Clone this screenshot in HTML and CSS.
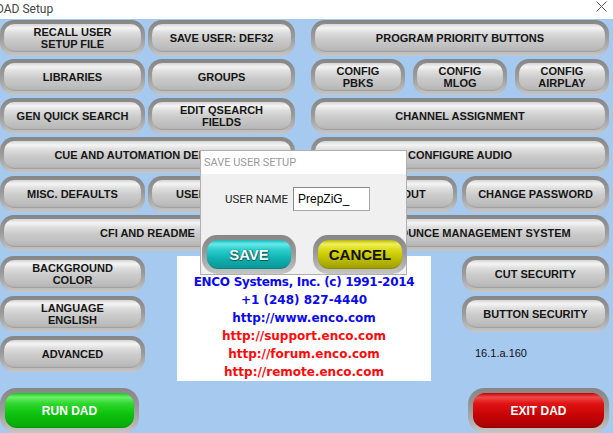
FILE: index.html
```html
<!DOCTYPE html>
<html>
<head>
<meta charset="utf-8">
<title>DAD Setup</title>
<link rel="stylesheet" href="styles.css">
</head>
<body>
<div class="titlebar">
  <span class="wintitle">DAD Setup</span>
  <svg class="close" width="11" height="11" viewBox="0 0 11 11"><path d="M0.5 0.5 L10.5 10.5 M10.5 0.5 L0.5 10.5" stroke="#555" stroke-width="1" fill="none"/></svg>
</div>
<div class="main">
  <div class="top">
    <div class="group group-left">
      <div class="row">
        <div class="btn w145"><span class="face">RECALL USER<br>SETUP FILE</span></div>
        <div class="btn w147"><span class="face">SAVE USER: DEF32</span></div>
      </div>
      <div class="row">
        <div class="btn w145"><span class="face">LIBRARIES</span></div>
        <div class="btn w147"><span class="face">GROUPS</span></div>
      </div>
      <div class="row">
        <div class="btn w145"><span class="face">GEN QUICK SEARCH</span></div>
        <div class="btn w147"><span class="face">EDIT QSEARCH<br>FIELDS</span></div>
      </div>
      <div class="row">
        <div class="btn full"><span class="face">CUE AND AUTOMATION DEFAULTS</span></div>
      </div>
      <div class="row">
        <div class="btn w145"><span class="face">MISC. DEFAULTS</span></div>
        <div class="btn w147"><span class="face">USER DEFAULTS</span></div>
      </div>
      <div class="row">
        <div class="btn full"><span class="face">CFI AND README</span></div>
      </div>
    </div>
    <div class="group group-right">
      <div class="row">
        <div class="btn full"><span class="face">PROGRAM PRIORITY BUTTONS</span></div>
      </div>
      <div class="row row-config">
        <div class="btn w94"><span class="face">CONFIG<br>PBKS</span></div>
        <div class="btn w94"><span class="face">CONFIG<br>MLOG</span></div>
        <div class="btn w94"><span class="face">CONFIG<br>AIRPLAY</span></div>
      </div>
      <div class="row">
        <div class="btn full"><span class="face">CHANNEL ASSIGNMENT</span></div>
      </div>
      <div class="row">
        <div class="btn full"><span class="face">CONFIGURE AUDIO</span></div>
      </div>
      <div class="row row-split">
        <div class="btn w146"><span class="face">PANEL LAYOUT</span></div>
        <div class="btn w147"><span class="face">CHANGE PASSWORD</span></div>
      </div>
      <div class="row">
        <div class="btn full"><span class="face">DAD ANNOUNCE MANAGEMENT SYSTEM</span></div>
      </div>
    </div>
  </div>

  <div class="lower">
    <div class="col col-left">
      <div class="btn w145"><span class="face">BACKGROUND<br>COLOR</span></div>
      <div class="btn w145"><span class="face">LANGUAGE<br>ENGLISH</span></div>
      <div class="btn w145"><span class="face">ADVANCED</span></div>
    </div>
    <div class="info">
      <div class="blue tight">ENCO Systems, Inc. (c) 1991-2014</div>
      <div class="blue">+1 (248) 827-4440</div>
      <div class="blue">http://www.enco.com</div>
      <div class="red">http://support.enco.com</div>
      <div class="red">http://forum.enco.com</div>
      <div class="red">http://remote.enco.com</div>
    </div>
    <div class="col col-right">
      <div class="btn w147"><span class="face">CUT SECURITY</span></div>
      <div class="btn w147"><span class="face">BUTTON SECURITY</span></div>
      <div class="version">16.1.a.160</div>
    </div>
  </div>

  <div class="bottom">
    <div class="btn big run"><span class="face">RUN DAD</span></div>
    <div class="btn big exit"><span class="face">EXIT DAD</span></div>
  </div>
</div>

<div class="dialog">
  <div class="dlg-title">SAVE USER SETUP</div>
  <div class="dlg-body">
    <div class="dlg-field">
      <span class="dlg-label">USER NAME</span>
      <span class="dlg-input">PrepZiG_</span>
    </div>
    <div class="dlg-buttons">
      <div class="btn dlg-btn save"><span class="face">SAVE</span></div>
      <div class="btn dlg-btn cancel"><span class="face">CANCEL</span></div>
    </div>
  </div>
</div>
</body>
</html>
```

FILE: styles.css
```css
html, body {
  margin: 0;
  padding: 0;
}
body {
  width: 613px;
  height: 433px;
  overflow: hidden;
  position: relative;
  background: #a6c9f0;
  font-family: "Liberation Sans", Arial, sans-serif;
}

.titlebar {
  height: 19px;
  background: #ffffff;
  display: flex;
  align-items: center;
  justify-content: space-between;
}
.wintitle {
  font-family: Roboto, "Liberation Sans", sans-serif;
  font-size: 12px;
  color: #444;
  margin-left: -4px;
  margin-top: -2px;
}
.close {
  margin-right: 6px;
  margin-top: -6px;
}

.main {
  padding-top: 1px;
}

.top {
  display: flex;
}
.group {
  display: flex;
  flex-direction: column;
  gap: 3px;
}
.group-left {
  width: 295px;
}
.group-right {
  width: 298px;
  margin-left: 16px;
}
.row {
  display: flex;
  height: 36px;
  gap: 3px;
}
.row-config {
  gap: 8px;
}
.row-split {
  gap: 5px;
}

.btn {
  box-sizing: border-box;
  height: 36px;
  padding: 4px;
  border-radius: 14px;
  background: linear-gradient(to bottom, #868686 0%, #999 45%, #b4b4b4 80%, #c6c6c6 100%);
  flex: none;
}
.btn .face {
  box-sizing: border-box;
  display: flex;
  align-items: center;
  justify-content: center;
  text-align: center;
  height: 100%;
  border-radius: 10px;
  background: linear-gradient(to bottom, #d6d6d6 0%, #f4f4f4 14%, #dedede 30%, #cacaca 55%, #bfbfbf 80%, #b3b3b3 100%);
  box-shadow: inset 0 -1px 1px rgba(0,0,0,0.12);
  font-weight: bold;
  font-size: 11px;
  line-height: 12px;
  color: #161616;
  white-space: nowrap;
  overflow: hidden;
}
.w145 { width: 145px; }
.w146 { width: 146px; }
.w147 { width: 147px; }
.w94 { width: 94px; }
.full { width: 100%; }

.lower {
  display: flex;
  margin-top: 5px;
  height: 125px;
}
.col {
  display: flex;
  flex-direction: column;
  gap: 4px;
}
.col-left {
  width: 145px;
}
.col-right {
  width: 147px;
}
.info {
  box-sizing: border-box;
  width: 254px;
  height: 125px;
  margin-left: 32px;
  margin-right: 31px;
  background: #ffffff;
  padding-top: 17px;
  font-family: "DejaVu Sans", Verdana, sans-serif;
  font-weight: bold;
  font-size: 12px;
  line-height: 18px;
  text-align: center;
  white-space: nowrap;
}
.tight { letter-spacing: -0.3px; }
.blue { color: #0a0af0; }
.red { color: #ff0a0a; }
.version {
  font-size: 11px;
  line-height: 14px;
  color: #111;
  margin-top: 10px;
  padding-left: 13px;
}

.bottom {
  display: flex;
  justify-content: space-between;
  margin-top: 7px;
  padding-right: 4px;
}
.btn.big {
  height: 45px;
  border-radius: 16px;
  padding: 5px;
}
.btn.big .face {
  border-radius: 12px;
  font-size: 12px;
  color: #ffffff;
}
.run { width: 139px; }
.exit { width: 141px; }
.run .face {
  background: linear-gradient(to bottom, #19c819 0%, #6aee6a 12%, #2fd82f 30%, #0dc20d 60%, #08a808 100%);
}
.exit .face {
  background: linear-gradient(to bottom, #c40000 0%, #f04a4a 12%, #e01414 30%, #c80505 60%, #a80000 100%);
}

.dialog {
  position: absolute;
  left: 200px;
  top: 150px;
  width: 207px;
  height: 125px;
  box-sizing: border-box;
  border: 1px solid #b0b0b0;
  background: #f0f0f0;
  display: flex;
  flex-direction: column;
}
.dlg-title {
  height: 23px;
  flex: none;
  background: #ffffff;
  color: #9a9a9a;
  font-family: Roboto, "Liberation Sans", sans-serif;
  font-size: 11px;
  line-height: 23px;
  padding-left: 3px;
}
.dlg-body {
  display: flex;
  flex-direction: column;
}
.dlg-field {
  display: flex;
  align-items: center;
  margin-top: 13px;
  padding-left: 24px;
  height: 24px;
}
.dlg-label {
  font-family: Roboto, "Liberation Sans", sans-serif;
  font-size: 11.5px;
  color: #222;
  width: 68px;
}
.dlg-input {
  box-sizing: border-box;
  width: 77px;
  height: 24px;
  background: #fff;
  border: 1px solid #a8a8a8;
  border-top-color: #8a8a8a;
  border-left-color: #8a8a8a;
  font-size: 12px;
  line-height: 22px;
  padding-left: 4px;
  color: #000;
}
.dlg-buttons {
  display: flex;
  gap: 17px;
  margin-top: 24px;
  padding-left: 1px;
}
.btn.dlg-btn {
  width: 94px;
  height: 39px;
  border-radius: 15px;
  padding: 5px;
}
.btn.dlg-btn .face {
  border-radius: 11px;
  font-size: 15px;
}
.save .face {
  color: #fff;
  text-shadow: 0 1px 1px #055, 1px 0 1px #055;
  background: linear-gradient(to bottom, #16b8b8 0%, #6ae8e8 14%, #2fd0d0 32%, #12b4b4 60%, #0a9494 100%);
}
.cancel .face {
  color: #111;
  background: linear-gradient(to bottom, #b8b800 0%, #f0f060 14%, #dcdc18 32%, #c2c200 60%, #9c9c00 100%);
}
```
